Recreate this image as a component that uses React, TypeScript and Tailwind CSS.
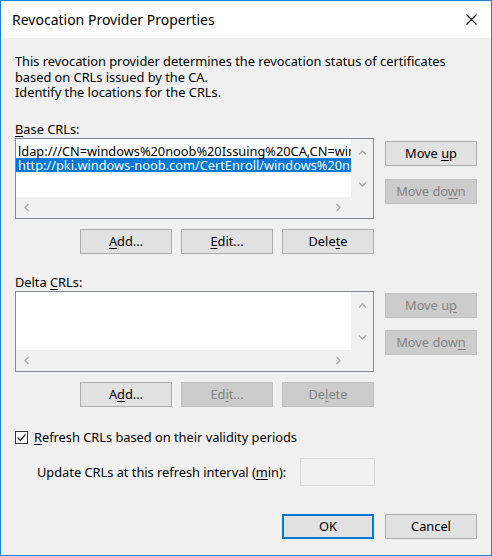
import type { ReactNode } from 'react';

const font = { fontFamily: '"Noto Sans", "Open Sans", sans-serif' };

function Btn({
  children,
  disabled,
  primary,
}: {
  children: ReactNode;
  disabled?: boolean;
  primary?: boolean;
}) {
  const base =
    'flex h-[25px] w-[92px] items-center justify-center text-[12.8px] leading-none';
  const look = disabled
    ? 'border border-[#bfbfbf] bg-[#cccccc] text-[#838383]'
    : primary
      ? 'border-2 border-[#0078d7] bg-[#e1e1e1] text-black'
      : 'border border-[#adadad] bg-[#e1e1e1] text-black';
  return (
    <div className={`${base} ${look}`}>
      <span className="whitespace-pre">{children}</span>
    </div>
  );
}

function U({ children }: { children: ReactNode }) {
  return <span className="underline underline-offset-[2px]">{children}</span>;
}

function Chevron({ dir }: { dir: 'up' | 'down' | 'left' | 'right' }) {
  const d = {
    up: 'M1 5.5 L4.5 2 L8 5.5',
    down: 'M1 2.5 L4.5 6 L8 2.5',
    left: 'M5.5 1 L2 4.5 L5.5 8',
    right: 'M2.5 1 L6 4.5 L2.5 8',
  }[dir];
  return (
    <svg width="9" height="9" viewBox="0 0 9 9" fill="none">
      <path d={d} stroke="#a6a6a6" strokeWidth="1.3" />
    </svg>
  );
}

function ListBox({ rows }: { rows: { text: string; selected?: boolean }[] }) {
  return (
    <div className="flex h-[81px] w-[359px] border border-[#828790] bg-[#f0f0f0]">
      <div className="flex w-[335px] flex-col">
        <div className="h-[58px] overflow-hidden bg-white pt-[5px]">
          {rows.map((r) => (
            <div
              key={r.text}
              className={`h-[14px] whitespace-nowrap pl-[2px] text-[12.8px] leading-[14px] ${
                r.selected ? 'bg-[#0078d7] text-white' : 'text-black'
              }`}
            >
              {r.text}
            </div>
          ))}
        </div>
        <div className="flex flex-1 items-center justify-between pl-[7px] pr-[8px]">
          <Chevron dir="left" />
          <Chevron dir="right" />
        </div>
      </div>
      <div className="flex h-[58px] flex-1 flex-col items-center justify-between pt-[10px] pb-[8px]">
        <Chevron dir="up" />
        <Chevron dir="down" />
      </div>
    </div>
  );
}

export default function App() {
  return (
    <div
      className="flex h-[556px] w-[492px] flex-col border border-[#1883d7] bg-[#f0f0f0] text-black"
      style={font}
    >
      <div className="flex h-[37px] items-center justify-between bg-white pl-[11px] pr-[14px]">
        <span className="text-[14px]">Revocation Provider Properties</span>
        <svg width="11" height="11" viewBox="0 0 11 11">
          <path d="M0.5 0.5 L10.5 10.5 M10.5 0.5 L0.5 10.5" stroke="#000" strokeWidth="1.1" />
        </svg>
      </div>

      <div className="flex flex-col pl-[14px] pr-[14px] pt-[16px] text-[12.8px]">
        <p className="leading-[15.5px]">
          This revocation provider determines the revocation status of certificates
          <br />
          based on CRLs issued by the CA.
          <br />
          Identify the locations for the CRLs.
        </p>

        <div className="mt-[20px] leading-[16px]">
          <U>B</U>ase CRLs:
        </div>
        <div className="mt-[1px] flex gap-[11px]">
          <div className="flex flex-col">
            <ListBox
              rows={[
                { text: 'ldap:///CN=windows%20noob%20Issuing%20CA,CN=windows-noob,CN=CDP' },
                {
                  text: 'http://pki.windows-noob.com/CertEnroll/windows%20noob%20Issuing%20CA.crl',
                  selected: true,
                },
              ]}
            />
            <div className="mt-[10px] flex justify-end gap-[9px]">
              <Btn>
                <U>A</U>dd...
              </Btn>
              <Btn>
                <U>E</U>dit...
              </Btn>
              <Btn>
                Dele<U>t</U>e
              </Btn>
            </div>
          </div>
          <div className="flex flex-col gap-[13px] pt-[3px]">
            <Btn>
              Move <U>u</U>p
            </Btn>
            <Btn disabled>
              Move do<U>w</U>n
            </Btn>
          </div>
        </div>

        <div className="mt-[20px] leading-[16px]">
          Delta <U>C</U>RLs:
        </div>
        <div className="mt-[1px] flex gap-[11px]">
          <div className="flex flex-col">
            <ListBox rows={[]} />
            <div className="mt-[10px] flex justify-end gap-[9px]">
              <Btn>
                A<U>d</U>d...
              </Btn>
              <Btn disabled>
                Ed<U>i</U>t...
              </Btn>
              <Btn disabled>
                De<U>l</U>ete
              </Btn>
            </div>
          </div>
          <div className="flex flex-col gap-[12px] pt-[2px]">
            <Btn disabled>
              Move u<U>p</U>
            </Btn>
            <Btn disabled>
              Move dow<U>n</U>
            </Btn>
          </div>
        </div>

        <div className="mt-[23px] flex h-[16px] items-center gap-[6px]">
          <div className="flex h-[13px] w-[13px] items-center justify-center border border-[#333333] bg-white">
            <svg width="11" height="11" viewBox="0 0 11 11" fill="none">
              <path d="M1.5 5.5 L4.2 8.3 L9.5 2.5" stroke="#333" strokeWidth="1.3" />
            </svg>
          </div>
          <span>
            <U>R</U>efresh CRLs based on their validity periods
          </span>
        </div>

        <div className="mt-[12px] flex h-[28px] items-center pl-[22px]">
          <span className="w-[263px] pt-[3px]">
            Update CRLs at this refresh interval (<U>m</U>in):
          </span>
          <div className="h-[28px] w-[75px] border border-[#d9d9d9] bg-[#f0f0f0]" />
        </div>

        <div className="mt-[28px] flex justify-end gap-[11px]">
          <Btn primary>OK</Btn>
          <Btn>Cancel</Btn>
        </div>
      </div>
    </div>
  );
}
